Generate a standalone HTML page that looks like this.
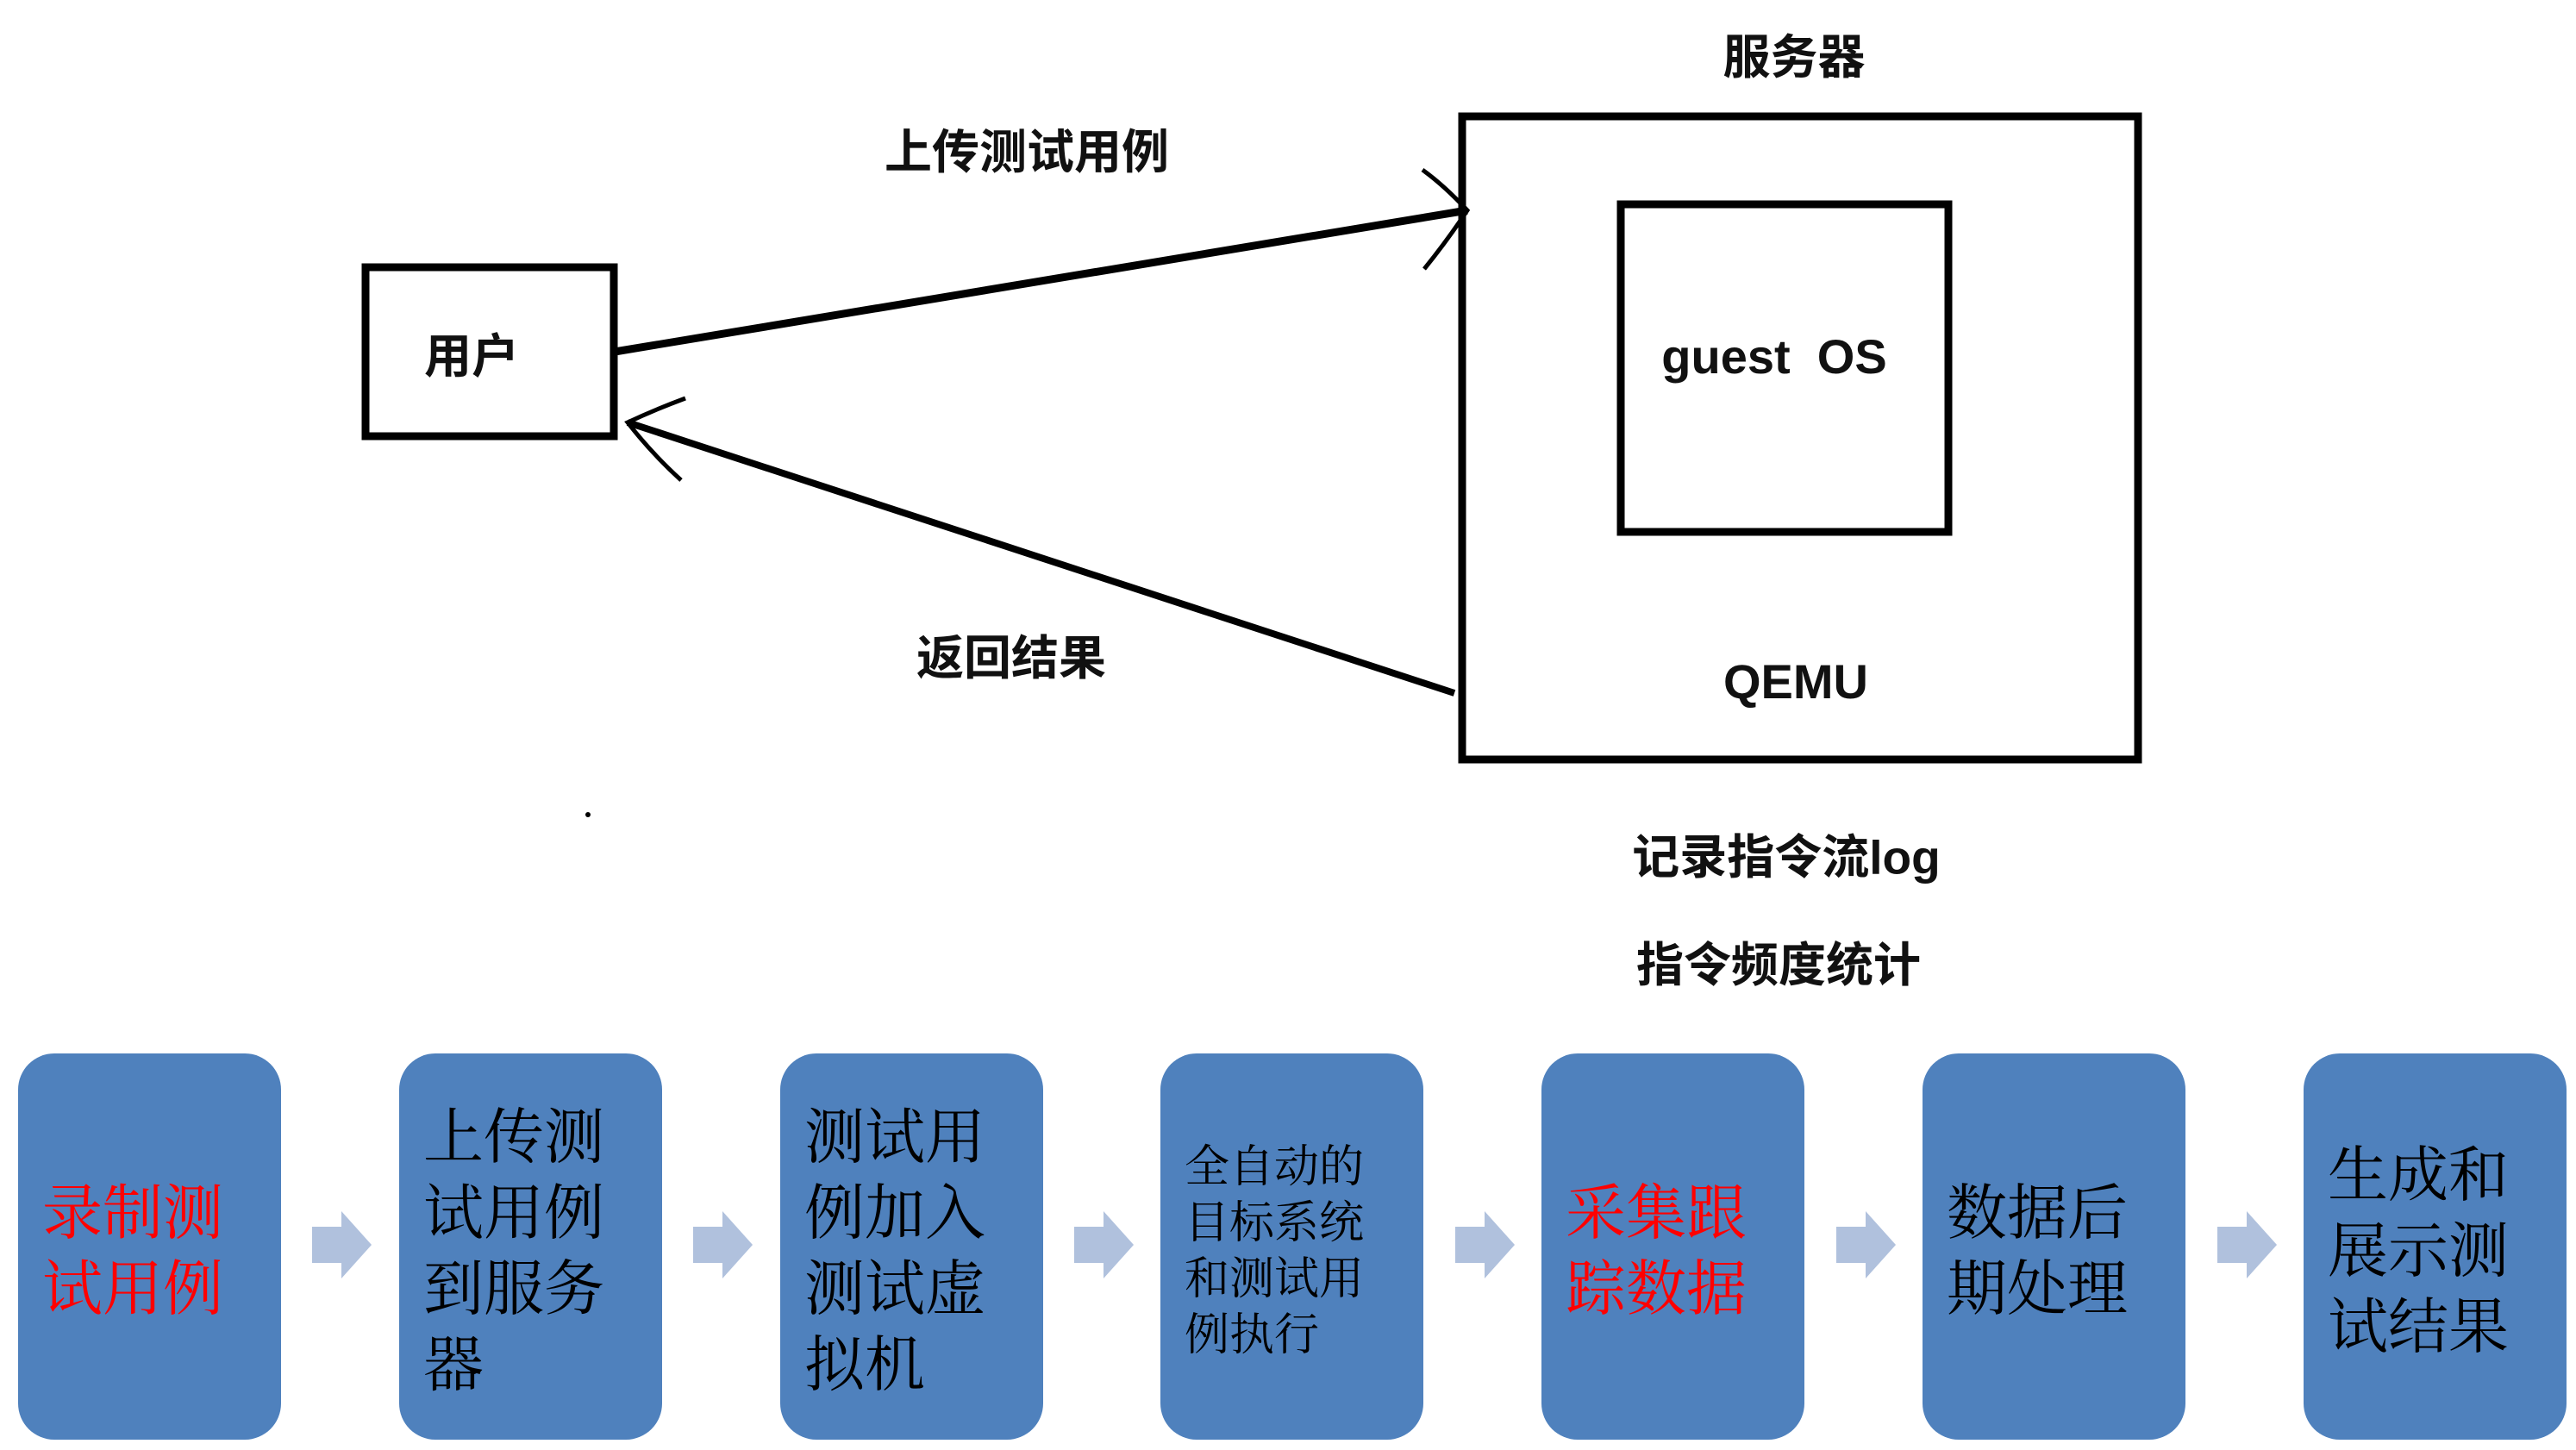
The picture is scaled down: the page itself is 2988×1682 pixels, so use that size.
<!DOCTYPE html>
<html><head><meta charset="utf-8"><style>
html,body{margin:0;padding:0;background:#fff;width:2988px;height:1682px;overflow:hidden;position:relative;font-family:"Liberation Sans","Noto Sans CJK SC",sans-serif}
.t{position:absolute;font-weight:bold;color:#111;white-space:nowrap;line-height:1;transform:translate(-50%,-50%)}
.box{position:absolute;top:1222px;width:305px;height:448px;background:#4F81BD;border-radius:42px;display:flex;align-items:center;justify-content:flex-start;box-sizing:border-box;padding-left:28px}
.box div{font-family:"Noto Serif CJK SC","WenQuanYi Zen Hei",serif;font-size:70px;line-height:88px;color:#000;width:230px}
.box div.small{font-size:52px;line-height:65px}
.arr{position:absolute;top:1405px}
</style></head><body>
<svg width="2988" height="1682" style="position:absolute;left:0;top:0">
<rect x="424" y="310" width="288" height="196" fill="none" stroke="#000" stroke-width="9"/>
<rect x="1696" y="135" width="784" height="746" fill="none" stroke="#000" stroke-width="9"/>
<rect x="1880" y="237" width="380" height="380" fill="none" stroke="#000" stroke-width="9"/>
<line x1="713" y1="408" x2="1702" y2="244" stroke="#000" stroke-width="9"/>
<path d="M1650 197 Q1675 215 1702 244 Q1678 280 1652 312" fill="none" stroke="#000" stroke-width="5"/>
<line x1="1687" y1="804" x2="728" y2="490" stroke="#000" stroke-width="8"/>
<path d="M795 462 Q760 475 728 490 Q755 525 790 557" fill="none" stroke="#000" stroke-width="5"/>
<circle cx="682" cy="945" r="3" fill="#000"/>
</svg>
<div class="t" style="left:2081px;top:67px;font-size:55px">服务器</div>
<div class="t" style="left:1191px;top:177px;font-size:55px">上传测试用例</div>
<div class="t" style="left:547px;top:414px;font-size:55px">用户</div>
<div class="t" style="left:2058px;top:414px;font-size:56px">guest&nbsp; OS</div>
<div class="t" style="left:2083px;top:791px;font-size:56px">QEMU</div>
<div class="t" style="left:1173px;top:764px;font-size:55px">返回结果</div>
<div class="t" style="left:2072px;top:995px;font-size:55px">记录指令流log</div>
<div class="t" style="left:2063px;top:1120px;font-size:55px">指令频度统计</div>

<div class="box" style="left:21px"><div style="color:#f00">录制测试用例</div></div>
<div class="box" style="left:463px"><div>上传测试用例到服务器</div></div>
<div class="box" style="left:905px"><div>测试用例加入测试虚拟机</div></div>
<div class="box" style="left:1346px"><div class="small" style="width:220px">全自动的目标系统和测试用例执行</div></div>
<div class="box" style="left:1788px"><div style="color:#f00">采集跟踪数据</div></div>
<div class="box" style="left:2230px"><div>数据后期处理</div></div>
<div class="box" style="left:2672px"><div>生成和展示测试结果</div></div>

<svg class="arr" style="left:362px" width="70" height="80"><polygon points="0,18 34,18 34,0 69,39 34,78 34,60 0,60" fill="#B0C1DD"/></svg>
<svg class="arr" style="left:804px" width="70" height="80"><polygon points="0,18 34,18 34,0 69,39 34,78 34,60 0,60" fill="#B0C1DD"/></svg>
<svg class="arr" style="left:1246px" width="70" height="80"><polygon points="0,18 34,18 34,0 69,39 34,78 34,60 0,60" fill="#B0C1DD"/></svg>
<svg class="arr" style="left:1688px" width="70" height="80"><polygon points="0,18 34,18 34,0 69,39 34,78 34,60 0,60" fill="#B0C1DD"/></svg>
<svg class="arr" style="left:2130px" width="70" height="80"><polygon points="0,18 34,18 34,0 69,39 34,78 34,60 0,60" fill="#B0C1DD"/></svg>
<svg class="arr" style="left:2572px" width="70" height="80"><polygon points="0,18 34,18 34,0 69,39 34,78 34,60 0,60" fill="#B0C1DD"/></svg>
</body></html>
